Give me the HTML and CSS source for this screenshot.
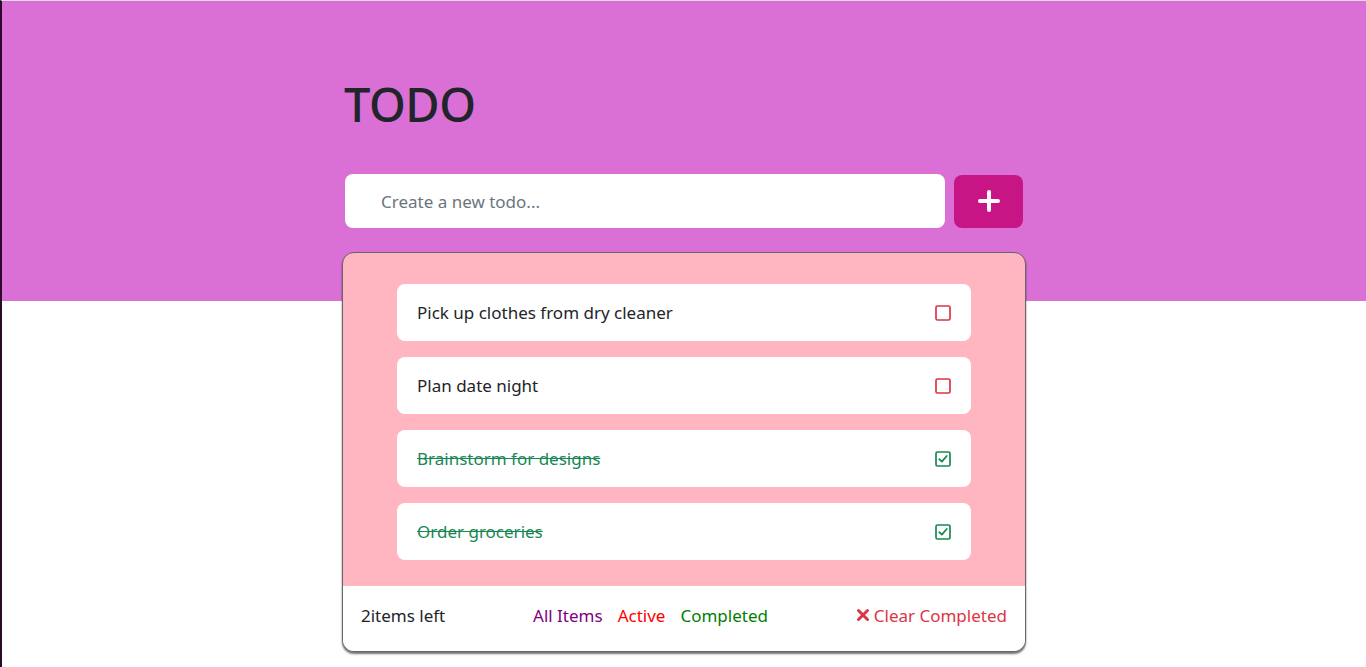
FILE: index.html
```html
<!DOCTYPE html>
<html lang="en">
<head>
<meta charset="utf-8">
<title>Todo</title>
<link rel="stylesheet" href="styles.css">
</head>
<body>
<main class="app">
  <h1 class="title">TODO</h1>
  <form class="new-todo">
    <input class="new-todo__input" type="text" placeholder="Create a new todo...">
    <button class="new-todo__add" type="button" aria-label="Add todo">
      <svg width="24" height="24" viewBox="0 0 24 24" aria-hidden="true"><path d="M12 3v18M3 12h18" stroke="#fff" stroke-width="4" stroke-linecap="round" fill="none"/></svg>
    </button>
  </form>
  <section class="card">
    <ul class="todo-list">
      <li class="todo">
        <span class="todo__text">Pick up clothes from dry cleaner</span>
        <svg class="todo__box todo__box--open" width="16" height="16" viewBox="0 0 16 16" aria-hidden="true"><rect x="1" y="1" width="14" height="14" rx="1.5" fill="none" stroke="currentColor" stroke-width="1.7"/></svg>
      </li>
      <li class="todo">
        <span class="todo__text">Plan date night</span>
        <svg class="todo__box todo__box--open" width="16" height="16" viewBox="0 0 16 16" aria-hidden="true"><rect x="1" y="1" width="14" height="14" rx="1.5" fill="none" stroke="currentColor" stroke-width="1.7"/></svg>
      </li>
      <li class="todo todo--done">
        <span class="todo__text">Brainstorm for designs</span>
        <svg class="todo__box" width="16" height="16" viewBox="0 0 16 16" aria-hidden="true"><rect x="1" y="1" width="14" height="14" rx="1.5" fill="none" stroke="currentColor" stroke-width="1.7"/><path d="M4.3 8.1l2.6 2.5 4.8-5.6" fill="none" stroke="currentColor" stroke-width="1.8" stroke-linecap="round" stroke-linejoin="round"/></svg>
      </li>
      <li class="todo todo--done">
        <span class="todo__text">Order groceries</span>
        <svg class="todo__box" width="16" height="16" viewBox="0 0 16 16" aria-hidden="true"><rect x="1" y="1" width="14" height="14" rx="1.5" fill="none" stroke="currentColor" stroke-width="1.7"/><path d="M4.3 8.1l2.6 2.5 4.8-5.6" fill="none" stroke="currentColor" stroke-width="1.8" stroke-linecap="round" stroke-linejoin="round"/></svg>
      </li>
    </ul>
    <footer class="card__footer">
      <span class="count">2items left</span>
      <nav class="filters">
        <a class="filter filter--all">All Items</a>
        <a class="filter filter--active">Active</a>
        <a class="filter filter--completed">Completed</a>
      </nav>
      <a class="clear">
        <svg width="14" height="14" viewBox="0 0 14 14" aria-hidden="true"><path d="M2.5 2.5l9 9M11.5 2.5l-9 9" stroke="currentColor" stroke-width="3" stroke-linecap="round"/></svg>
        Clear Completed
      </a>
    </footer>
  </section>
</main>
</body>
</html>
```

FILE: styles.css
```css
* { box-sizing: border-box; }

html { background: #fff; }

body {
  margin: 0;
  min-height: 100vh;
  border-top: 1px solid #dedede;
  border-left: 2px solid #2b0a29;
  background: linear-gradient(#da70d6 0, #da70d6 300px, #fff 300px);
  background-repeat: no-repeat;
  font-family: "Noto Sans", "Open Sans", sans-serif;
  color: #212529;
}

.app {
  width: 684px;
  margin: 0 auto;
  padding-top: 75px;
}

.title {
  margin: 0 0 41px;
  padding-left: 2px;
  font-size: 47px;
  line-height: 57px;
  font-weight: 500;
  color: #212529;
  letter-spacing: -0.5px;
}

.new-todo {
  display: flex;
  align-items: center;
  gap: 9px;
  padding: 0 3px;
  margin: 0 0 24px;
}

.new-todo__input {
  width: 600px;
  height: 54px;
  border: none;
  border-radius: 8px;
  padding: 0 36px;
  font-family: inherit;
  font-size: 17px;
  color: #212529;
  background: #fff;
  outline: none;
}

.new-todo__input::placeholder { color: #6c757d; }

.new-todo__add {
  width: 69px;
  height: 53px;
  border: none;
  border-radius: 8px;
  background: #c71585;
  display: flex;
  align-items: center;
  justify-content: center;
  padding: 0;
}

.card {
  border: 1px solid #666;
  border-radius: 12px;
  overflow: hidden;
  background: #ffb6c1;
  box-shadow: 0 2px 2px rgba(0, 0, 0, 0.55);
}

.todo-list {
  list-style: none;
  margin: 0;
  padding: 31px 54px 26px;
  display: flex;
  flex-direction: column;
  gap: 16px;
}

.todo {
  height: 57px;
  background: #fff;
  border-radius: 8px;
  display: flex;
  align-items: center;
  justify-content: space-between;
  padding: 0 20px 0 20px;
  font-size: 17px;
}

.todo__box { color: #dc3545; flex: none; }

.todo--done .todo__text {
  color: #198754;
  text-decoration: line-through;
}

.todo--done .todo__box { color: #198754; }

.card__footer {
  height: 65px;
  background: #fff;
  display: flex;
  align-items: center;
  justify-content: space-between;
  padding: 0 18px 7px;
  font-size: 17px;
}

.filters {
  display: flex;
  gap: 15px;
}

.filter { cursor: pointer; }
.filter--all { color: #800080; }
.filter--active { color: #ff0000; }
.filter--completed { color: #008000; }

.clear {
  color: #dc3545;
  display: flex;
  align-items: center;
  gap: 4px;
  cursor: pointer;
}
```
